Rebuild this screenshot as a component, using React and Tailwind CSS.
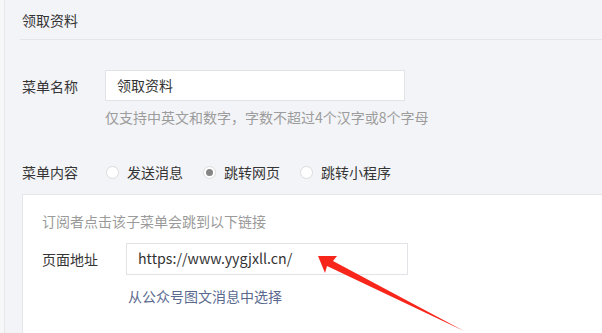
import React from "react";

function Radio({ checked, label }) {
  return (
    <div className="flex items-center">
      <span className="w-[13px] h-[13px] rounded-full border border-[#dcdcdc] bg-white flex items-center justify-center mr-[8px]">
        {checked && <span className="w-[7px] h-[7px] rounded-full bg-[#858585]" />}
      </span>
      <span>{label}</span>
    </div>
  );
}

export default function App() {
  return (
    <div className="relative w-[602px] h-[333px] overflow-hidden bg-[#f3f4f7] flex font-['Noto_Sans_CJK_SC','Microsoft_YaHei',sans-serif] text-[14px] text-[#353535]">
      <div className="w-[5px] shrink-0 bg-[#f6f7f9] border-r border-[#e6e8ec]" />
      <div className="flex-1 flex flex-col pl-[15px]">
        <div className="h-[40px] border-b border-[#e3e5ea] flex items-center pl-[2px] leading-[20px] text-[#333]">
          领取资料
        </div>
        <div className="pl-[2px] mt-[30px] flex items-center">
          <div className="w-[83px] leading-[20px]">菜单名称</div>
          <div className="w-[300px] h-[31px] bg-white border border-[#e2e3e6] flex items-center pl-[11px] text-[#333]">
            领取资料
          </div>
        </div>
        <div className="pl-[85px] mt-[6px] leading-[20px] text-[#9c9c9c]">
          仅支持中英文和数字，字数不超过4个汉字或8个字母
        </div>
        <div className="pl-[2px] mt-[35px] flex items-center leading-[20px]">
          <div className="w-[84px]">菜单内容</div>
          <div className="flex items-center gap-[20px]">
            <Radio label="发送消息" />
            <Radio checked label="跳转网页" />
            <Radio label="跳转小程序" />
          </div>
        </div>
        <div className="ml-[2px] mt-[12px] flex-1 bg-white border-l border-t border-[#e4e6ea] pl-[19px] pt-[16px]">
          <div className="leading-[20px] text-[#9a9a9a]">订阅者点击该子菜单会跳到以下链接</div>
          <div className="mt-[12px] flex items-center">
            <div className="w-[84px] leading-[20px]">页面地址</div>
            <div className="w-[282px] h-[32px] bg-white border border-[#e2e3e6] flex items-center pl-[11px] text-[14.2px] text-[#333]">
              https://www.yygjxll.cn/
            </div>
          </div>
          <div className="mt-[11px] pl-[86px] leading-[20px] text-[#5a6a8e]">从公众号图文消息中选择</div>
        </div>
      </div>
      <svg className="absolute left-0 top-0 pointer-events-none" width="602" height="333" viewBox="0 0 602 333">
        <polygon
          points="318,256 337,256 333,261 464,331 327,266 325,273"
          fill="#f8251a"
        />
      </svg>
    </div>
  );
}
